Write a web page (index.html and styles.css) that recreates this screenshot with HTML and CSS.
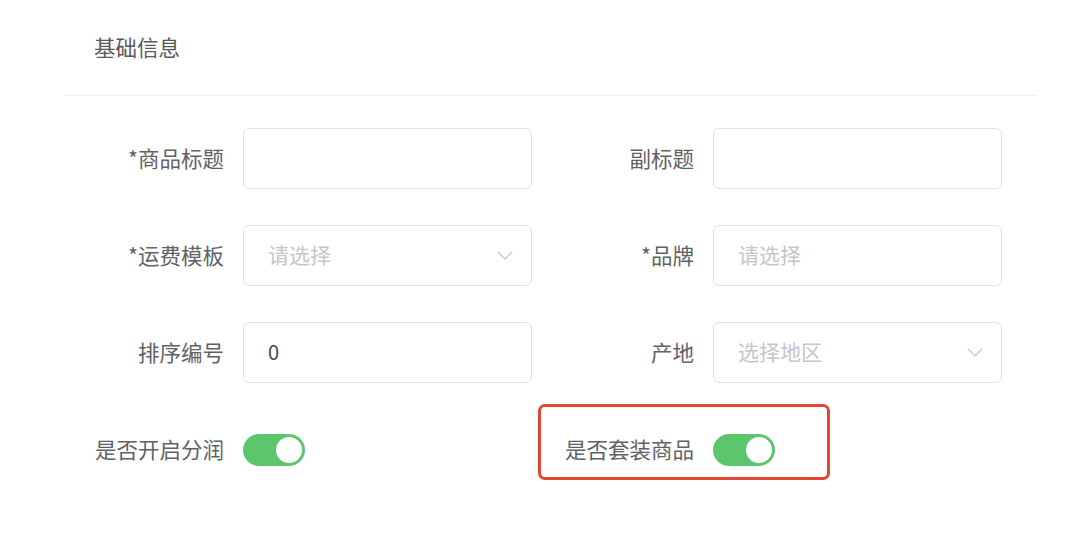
FILE: index.html
```html
<!DOCTYPE html>
<html lang="zh-CN">
<head>
  <meta charset="UTF-8">
  <meta name="viewport" content="width=device-width, initial-scale=1.0">
  <title>基础信息</title>
  <link rel="stylesheet" href="styles.css">
</head>
<body>
  <div class="panel">
    <div class="panel-header">基础信息</div>
    <form class="form-grid">
      <div class="form-item">
        <label class="form-label">*商品标题</label>
        <div class="input-box"></div>
      </div>
      <div class="form-item">
        <label class="form-label">副标题</label>
        <div class="input-box"></div>
      </div>

      <div class="form-item">
        <label class="form-label">*运费模板</label>
        <div class="input-box">
          <span class="placeholder">请选择</span>
          <svg class="arrow" width="16" height="9" viewBox="0 0 16 9"><path d="M1 1 L8 8 L15 1" fill="none" stroke="#c0c4cc" stroke-width="1.2"/></svg>
        </div>
      </div>
      <div class="form-item">
        <label class="form-label">*品牌</label>
        <div class="input-box">
          <span class="placeholder">请选择</span>
        </div>
      </div>

      <div class="form-item">
        <label class="form-label">排序编号</label>
        <div class="input-box">
          <span class="value">0</span>
        </div>
      </div>
      <div class="form-item">
        <label class="form-label">产地</label>
        <div class="input-box">
          <span class="placeholder">选择地区</span>
          <svg class="arrow" width="16" height="9" viewBox="0 0 16 9"><path d="M1 1 L8 8 L15 1" fill="none" stroke="#c0c4cc" stroke-width="1.2"/></svg>
        </div>
      </div>

      <div class="form-item">
        <label class="form-label">是否开启分润</label>
        <span class="switch"><span class="knob"></span></span>
      </div>
      <div class="form-item highlight">
        <label class="form-label">是否套装商品</label>
        <span class="switch"><span class="knob"></span></span>
      </div>
    </form>
  </div>
</body>
</html>
```

FILE: styles.css
```css
body {
  margin: 0;
  background: #fff;
  font-family: "Noto Sans CJK SC", "Noto Sans", sans-serif;
  color: #5f6266;
}
.panel {
  width: 1080px;
}
.panel-header {
  margin-left: 64px;
  width: 942px;
  height: 93px;
  padding: 0 0 2px 30px;
  display: flex;
  align-items: center;
  font-size: 21.5px;
  color: #57595c;
  border-bottom: 1px solid #eceef3;
}
.form-grid {
  display: grid;
  grid-template-columns: 470px 470px;
  row-gap: 36px;
  padding: 32px 0 0 82px;
}
.form-item {
  display: flex;
  align-items: center;
  height: 61px;
  position: relative;
}
.form-label {
  width: 142px;
  margin-right: 19px;
  padding-bottom: 3px;
  text-align: right;
  font-size: 21.5px;
  color: #5f6266;
  white-space: nowrap;
}
.input-box {
  box-sizing: border-box;
  width: 289px;
  height: 61px;
  border: 1px solid #dfe1e8;
  border-radius: 6px;
  display: flex;
  align-items: center;
  justify-content: space-between;
  padding: 0 18px 0 24px;
  font-size: 21px;
}
.placeholder {
  color: #c3c6cd;
  padding-bottom: 3px;
}
.value {
  color: #45484c;
  font-size: 20px;
  padding-bottom: 2px;
}
.arrow {
  display: block;
}
.switch {
  box-sizing: border-box;
  width: 62px;
  height: 32px;
  border-radius: 16px;
  background: #5cc66d;
  display: flex;
  align-items: center;
  justify-content: flex-end;
  padding-right: 3px;
}
.knob {
  width: 26px;
  height: 26px;
  border-radius: 50%;
  background: #fff;
}
.highlight::after {
  content: "";
  position: absolute;
  left: -14px;
  top: -15px;
  width: 292px;
  height: 76px;
  box-sizing: border-box;
  border: 3px solid #e4472f;
  border-radius: 7px;
}
```
